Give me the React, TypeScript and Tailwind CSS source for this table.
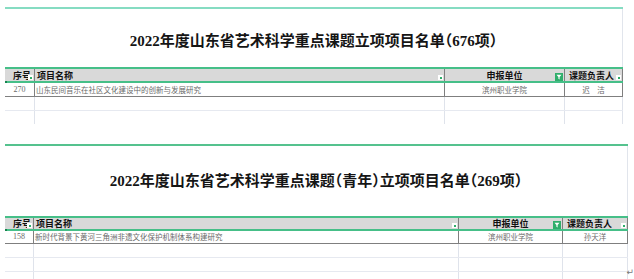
import React from 'react';

const cjk = "font-['Noto_Sans_CJK_SC',sans-serif]";

function Dropdown() {
  return (
    <span className="absolute right-[1px] bottom-[1px] w-[5px] h-[5px] bg-white flex items-center justify-center">
      <span className="w-[2px] h-[2px] bg-[#2fae6b]" />
    </span>
  );
}

function Filter() {
  return (
    <span className="absolute right-[1px] bottom-[0px] w-[8px] h-[8px] bg-[#2fae6b] flex items-center justify-center">
      <svg width="6" height="6" viewBox="0 0 6 6">
        <path d="M0.5 0.8 H5.5 L3.6 3 V5.4 L2.4 4.8 V3 Z" fill="#fff" />
      </svg>
    </span>
  );
}

type BlockProps = {
  width: string;
  topLine: string;
  titleBox: string;
  title: string;
  cols: [string, string, string, string];
  headH: string;
  rowH: string;
  row: [string, string, string, string];
  empties: string[];
};

function Block({ width, topLine, titleBox, title, cols, headH, rowH, row, empties }: BlockProps) {
  return (
    <div className={`ml-[5px] ${width} ${cjk}`}>
      <div className={`border-t-2 ${topLine}`} />
      <div className={`${titleBox} flex justify-center border-r border-[#e1e5ec]`}>
        <div className="font-['Liberation_Serif','Noto_Sans_CJK_SC',serif] font-bold text-[15px] leading-[16px] text-[#151515] [font-feature-settings:'halt']">
          {title}
        </div>
      </div>

      <div className={`relative flex ${headH} border-y-2 border-[#46bf88] bg-[#d9d9d9] text-[9px] leading-none font-bold text-[#111]`}>
        <div className={`${cols[0]} relative border-r border-[#7f7f7f] flex items-center pl-[8px] overflow-hidden whitespace-nowrap`}>
          序号
          <Dropdown />
        </div>
        <div className={`${cols[1]} relative border-r border-[#7f7f7f] flex items-center pl-[2px]`}>
          项目名称
          <Dropdown />
        </div>
        <div className={`${cols[2]} relative border-r border-[#7f7f7f] flex items-center justify-center`}>
          申报单位
          <Filter />
        </div>
        <div className={`${cols[3]} relative border-r border-[#7f7f7f] flex items-center pl-[4px]`}>
          课题负责人
          <Dropdown />
        </div>
        <span className="absolute left-0 bottom-[-2px] w-[2px] h-[2px] bg-[#16824d]" />
      </div>

      <div className={`flex ${rowH} border-b border-[#7f7f7f] text-[7.5px] leading-none text-[#6a6a6a]`}>
        <div className={`${cols[0]} border-r border-[#7f7f7f] flex items-center justify-center font-['Liberation_Serif',serif] text-[8px]`}>
          {row[0]}
        </div>
        <div className={`${cols[1]} border-r border-[#7f7f7f] flex items-center pl-[1px]`}>{row[1]}</div>
        <div className={`${cols[2]} border-r border-[#7f7f7f] flex items-center justify-center`}>{row[2]}</div>
        <div className={`${cols[3]} border-r border-[#7f7f7f] flex items-center justify-center`}>{row[3]}</div>
      </div>

      {empties.map((e, i) => (
        <div key={i} className={`flex ${e}`}>
          {cols.map((c, j) => (
            <div key={j} className={`${c} h-full border-r border-[#dfe3eb]`} />
          ))}
        </div>
      ))}
    </div>
  );
}

export default function App() {
  return (
    <div className="relative w-[634px] h-[279px] bg-white overflow-hidden pt-[7px]">
      <Block
        width="w-[618px]"
        topLine="border-[#86dcc2]"
        titleBox="h-[58px] pt-[24px]"
        title="2022年度山东省艺术科学重点课题立项项目名单（676项）"
        cols={['w-[30px]', 'w-[410px]', 'w-[120px]', 'w-[58px]']}
        headH="h-[16px]"
        rowH="h-[14px]"
        row={['270', '山东民间音乐在社区文化建设中的创新与发展研究', '滨州职业学院', '迟　洁']}
        empties={['h-[14px] border-b border-[#e6e9f0]', 'h-[13px]']}
      />
      <div className="h-[20px]" />
      <Block
        width="w-[623px]"
        topLine="border-[#55c28e]"
        titleBox="h-[70px] pt-[27px]"
        title="2022年度山东省艺术科学重点课题（青年）立项项目名单（269项）"
        cols={['w-[29px]', 'w-[425px]', 'w-[104px]', 'w-[65px]']}
        headH="h-[15px]"
        rowH="h-[13px]"
        row={['158', '新时代背景下黄河三角洲非遗文化保护机制体系构建研究', '滨州职业学院', '孙天洋']}
        empties={['h-[14px] border-b border-[#e6e9f0]', 'h-[14px] border-b border-[#e6e9f0]', 'h-[14px]']}
      />
      <span className="absolute right-[0px] bottom-[2px] text-[9px] leading-none text-[#777] font-['DejaVu_Sans',sans-serif]">
        ↵
      </span>
    </div>
  );
}
